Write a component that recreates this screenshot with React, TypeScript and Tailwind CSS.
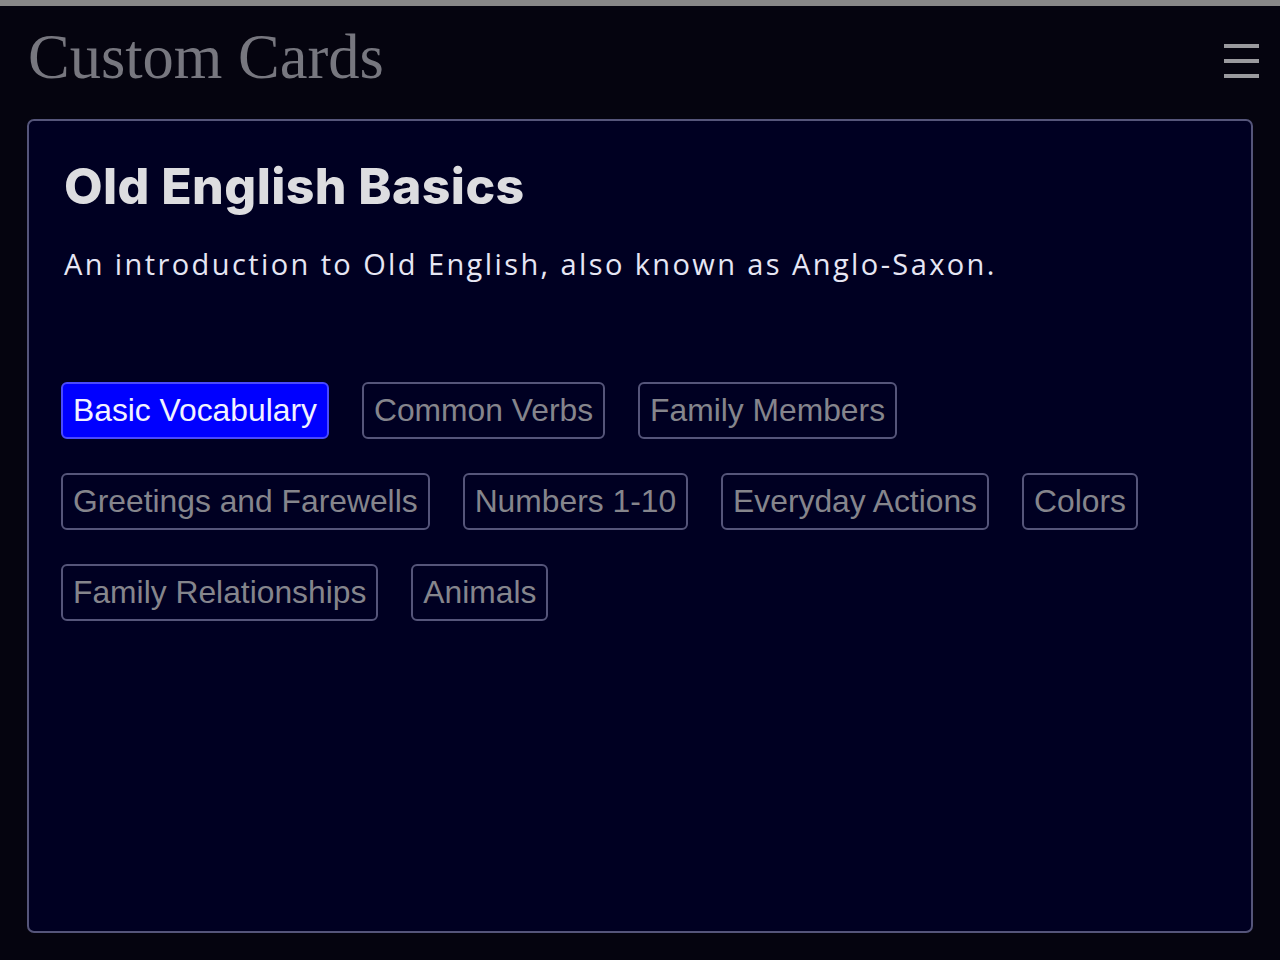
import React from "react";

const topics = [
  "Basic Vocabulary",
  "Common Verbs",
  "Family Members",
  "Greetings and Farewells",
  "Numbers 1-10",
  "Everyday Actions",
  "Colors",
  "Family Relationships",
  "Animals",
];

export default function App() {
  return (
    <div className="min-h-screen h-[960px] bg-[#05040f] flex flex-col">
      <div className="h-[6px] bg-[#888888] shrink-0" />
      <header className="h-[113px] shrink-0 flex items-start justify-between pl-[28px] pr-[21px]">
        <h1
          className="pt-[20px] text-[62.5px] leading-none text-[#77777f]"
          style={{ fontFamily: '"Liberation Serif", "DejaVu Serif", serif' }}
        >
          Custom Cards
        </h1>
        <button className="mt-[38px] flex flex-col gap-[11px] w-[35px]" aria-label="menu">
          <span className="block h-[4px] w-[35px] bg-[#9a9a9e]" />
          <span className="block h-[4px] w-[35px] bg-[#9a9a9e]" />
          <span className="block h-[4px] w-[35px] bg-[#9a9a9e]" />
        </button>
      </header>
      <main className="flex-1 px-[27px] pb-[27px] flex">
        <section className="flex-1 rounded-[7px] border-2 border-[#55557a] bg-[#000022] px-[35px] pt-[40px]">
          <h2
            className="text-[50px] leading-none font-extrabold tracking-[0.4px] text-[#dddde0]"
            style={{ fontFamily: 'Inter, "Open Sans", sans-serif' }}
          >
            Old English Basics
          </h2>
          <p
            className="mt-[38px] text-[29px] leading-none tracking-[2.4px] text-[#e6e6f4]"
            style={{ fontFamily: '"Open Sans", "Noto Sans", sans-serif' }}
          >
            An introduction to Old English, also known as Anglo-Saxon.
          </p>
          <div
            className="mt-[104px] flex flex-wrap gap-x-[33px] gap-y-[34px] -ml-[3px]"
            style={{ fontFamily: '"Liberation Sans", Arial, sans-serif' }}
          >
            {topics.map((t, i) => (
              <button
                key={t}
                className={
                  i === 0
                    ? "h-[57px] px-[10px] rounded-[6px] border-2 border-[#4a4aff] bg-[#0000ff] text-[31.8px] leading-none text-[#f2f2ff]"
                    : "h-[57px] px-[10px] rounded-[6px] border-2 border-[#55557a] bg-transparent text-[31.8px] leading-none text-[#85858c]"
                }
              >
                {t}
              </button>
            ))}
          </div>
        </section>
      </main>
    </div>
  );
}
